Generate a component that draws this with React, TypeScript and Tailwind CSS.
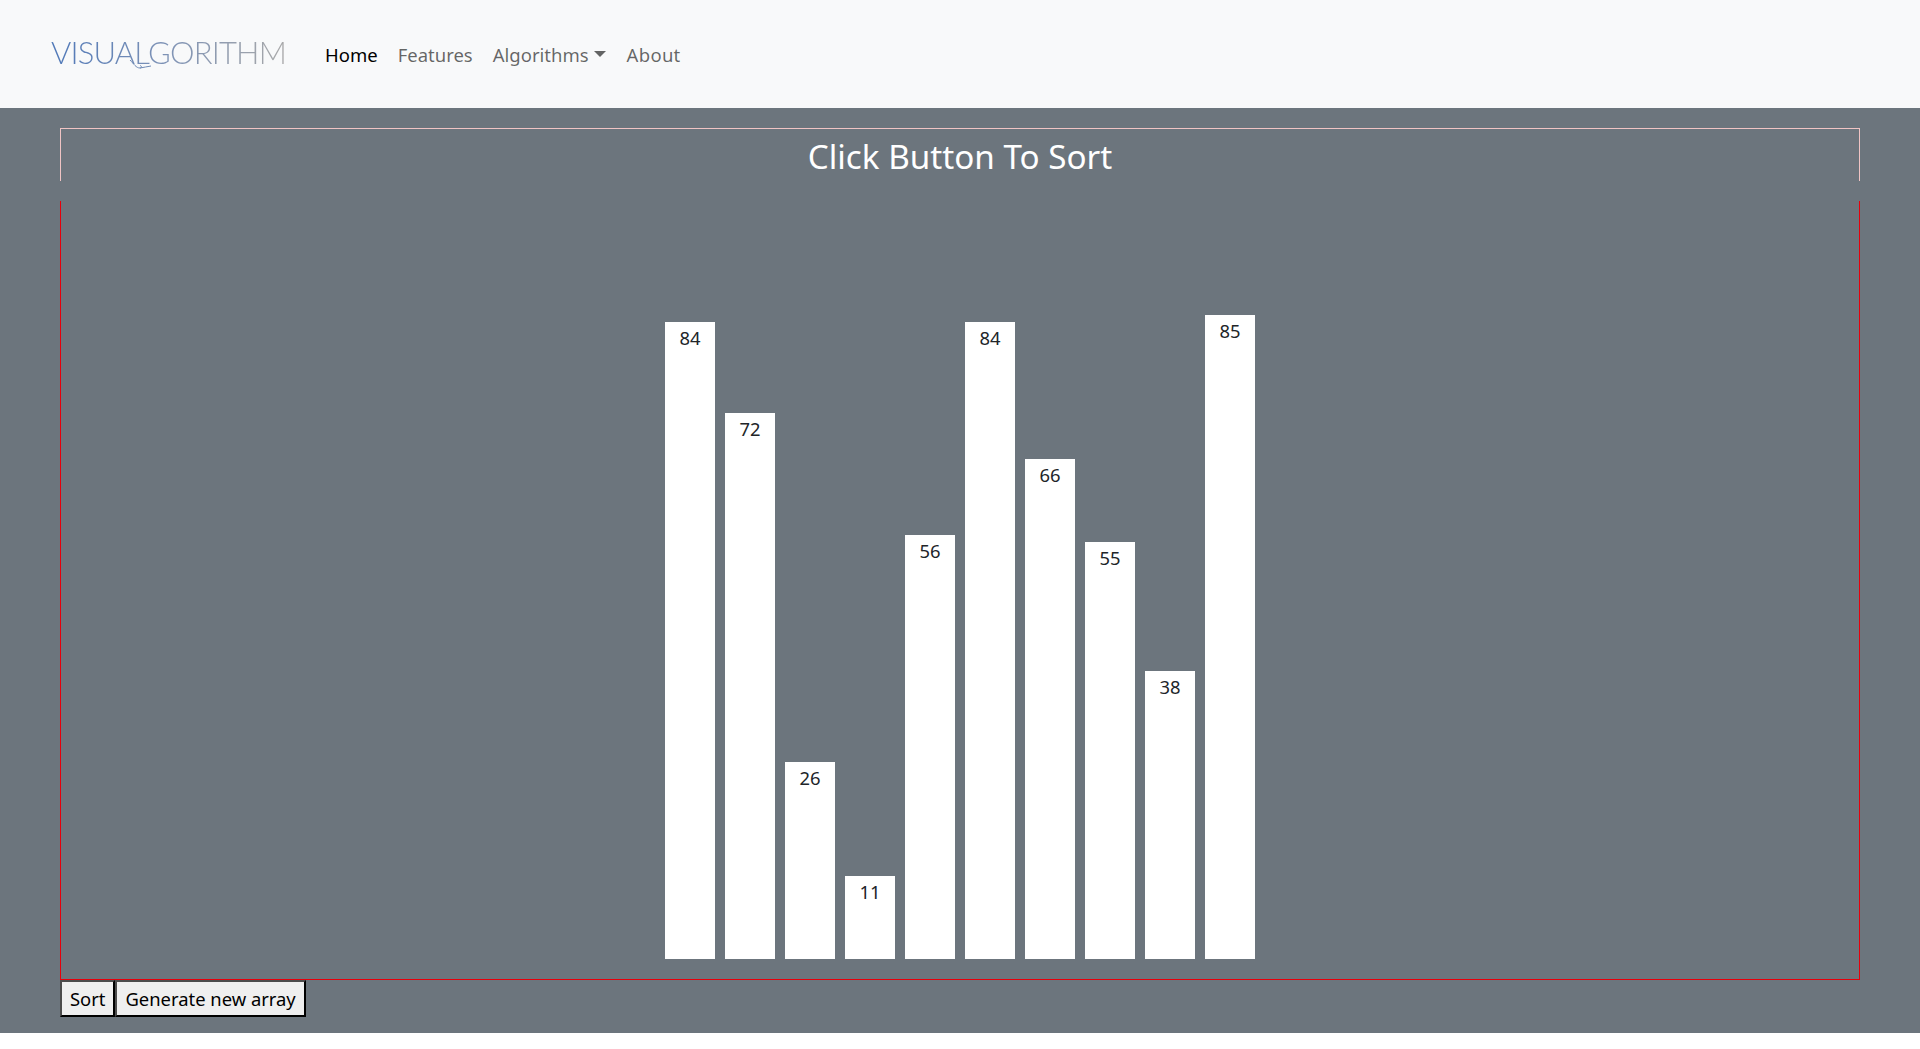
const bars = [
  { value: 84, height: 637 },
  { value: 72, height: 546 },
  { value: 26, height: 197 },
  { value: 11, height: 83 },
  { value: 56, height: 424 },
  { value: 84, height: 637 },
  { value: 66, height: 500 },
  { value: 55, height: 417 },
  { value: 38, height: 288 },
  { value: 85, height: 644 },
];

const FONT = "font-['Noto_Sans','Open_Sans',sans-serif]";
const BUTTON =
  "h-[37px] px-[8px] bg-[#efefef] border-2 border-t-[#4c4c4c] border-l-[#4c4c4c] border-r-black border-b-black text-[18.4px] leading-[33px] text-black";

export default function App() {
  return (
    <div className={`${FONT} bg-white min-h-[1049px]`}>
      <nav className="h-[108px] bg-[#f8f9fa] flex items-center pl-[51px]">
        <a
          href="#"
          className="relative w-[235px] mr-[39px] mt-[-5px] whitespace-nowrap text-[31px] leading-[36px] tracking-[-0.8px] font-light font-['Lato',sans-serif] bg-gradient-to-r from-[#4f78b8] via-[#7f93b5] to-[#a8a8a8] bg-clip-text text-transparent"
        >
          VISUALGORITHM
          <svg className="absolute left-[76px] top-[24px] w-[30px] h-[14px]" viewBox="0 0 30 14" fill="none">
            <path d="M3 2 C7 6 9 10 13 10 C15 10 15 8 13 7.5 M13 10 C17 9.5 20 8.5 24 8" stroke="#6f8ab5" strokeWidth="1" />
          </svg>
        </a>
        <ul className="flex items-center gap-[20px] text-[18.5px] leading-[27px] text-[#00000099]">
          <li className="text-black">Home</li>
          <li>Features</li>
          <li className="flex items-center mr-[1px]">
            Algorithms
            <span className="ml-[5px] w-0 h-0 border-x-[6px] border-x-transparent border-t-[6px] border-t-[#00000099]" />
          </li>
          <li className="tracking-[0.3px]">About</li>
        </ul>
      </nav>
      <main className="bg-[#6c757d] h-[925px] px-[60px] pt-[20px]">
        <div className="h-[53px] border-t border-x border-[#f0c4c4] flex justify-center">
          <h1 className="text-[33.2px] leading-[56px] text-white font-normal">Click Button To Sort</h1>
        </div>
        <div className="mt-[20px] h-[779px] border-b border-x border-red-600 flex items-end justify-center gap-[10px] pb-[20px]">
          {bars.map((b, i) => (
            <div
              key={i}
              className="w-[50px] bg-white text-center text-[18.4px] leading-[27px] pt-[2px] text-[#212529]"
              style={{ height: b.height }}
            >
              {b.value}
            </div>
          ))}
        </div>
        <div className="flex">
          <button className={BUTTON}>Sort</button>
          <button className={BUTTON}>Generate new array</button>
        </div>
      </main>
    </div>
  );
}
